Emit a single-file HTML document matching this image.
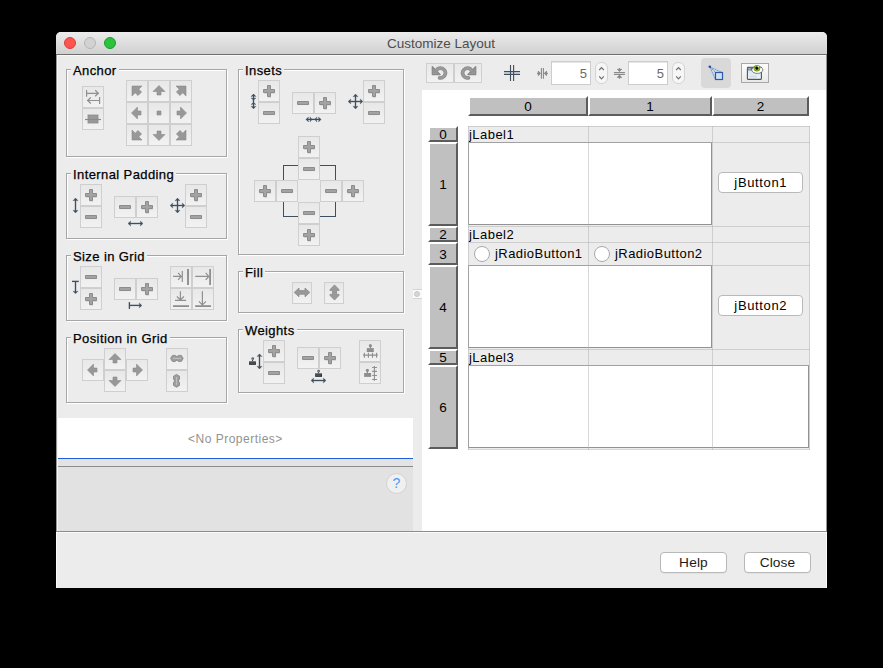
<!DOCTYPE html>
<html><head><meta charset="utf-8">
<style>
*{box-sizing:border-box;margin:0;padding:0}
html,body{width:883px;height:668px;background:#000;overflow:hidden;font-family:"Liberation Sans",sans-serif;}
.a{position:absolute}
#win{position:absolute;left:56px;top:32px;width:771px;height:556px;background:#ececec;border-radius:5px 5px 0 0;overflow:hidden}
#title{position:absolute;left:0;top:0;width:771px;height:23px;background:linear-gradient(#ececec,#d0d0d0);border-bottom:1px solid #6e6e6e}
.dot{position:absolute;top:5px;width:12px;height:12px;border-radius:50%}
.grp{position:absolute;border:1px solid #a6a6a6;box-shadow:inset 1px 1px 0 #fff,1px 1px 0 #fff}
.gt{position:absolute;font-size:13px;color:#000;background:#ececec;padding:0 2px 0 2px;line-height:14px;letter-spacing:0.4px;-webkit-text-stroke:0.25px #000}
.b{position:absolute;border:1px solid #cfcfcf;background:linear-gradient(#e8e8e8,#f2f2f2)}
.b svg{position:absolute;left:-1px;top:-1px;overflow:visible}
svg.a{overflow:visible}
.tf{background:#fff;border:1px solid #cdcdcd;box-shadow:inset 0 1px 0 #e6e6e6;font-size:13px;color:#6a6a6a;text-align:right;padding-right:3px;line-height:23px}
.sp{border:1px solid #d3d3d3;border-radius:6px;background:#f6f6f6}
.hd{background:#c0c0c0;border-style:solid;border-width:2px;border-color:#fff #5c5c5c #5c5c5c #fff;font-size:13.5px;color:#000;text-align:center;line-height:16px;padding-top:1px}
.lbl{font-size:13px;color:#000;line-height:14px;letter-spacing:0.45px;white-space:nowrap}
.jb{background:#fff;border:1px solid #b9b9b9;border-radius:4px;font-size:13px;color:#000;text-align:center;line-height:19px;letter-spacing:0.65px;text-indent:0.6px}
.gl{background:rgba(175,175,175,0.5)}
.pb{background:#fff;border:1px solid #b8b8b8;border-radius:4px;font-size:13.7px;color:#1a1a1a;text-align:center;line-height:19px;letter-spacing:0.15px;box-shadow:0 0.5px 0.5px rgba(0,0,0,0.08)}
</style></head><body>
<svg width="0" height="0" style="position:absolute">
<defs>
<symbol id="pl" viewBox="0 0 22 22" overflow="visible"><path d="M9.5 6.5h3v4h4v3h-4v4h-3v-4h-4v-3h4z" fill="#d9d9d9" transform="translate(0.6,0.6)"/><path d="M9.5 5.5h3v4h4v3h-4v4h-3v-4h-4v-3h4z" fill="#a3a3a3" stroke="#8c8c8c" stroke-width="1"/></symbol>
<symbol id="mi" viewBox="0 0 22 22" overflow="visible"><path d="M5.5 9.5h11v3h-11z" fill="#d9d9d9" transform="translate(0.6,0.6)"/><path d="M5.5 9.5h11v3h-11z" fill="#a3a3a3" stroke="#8c8c8c" stroke-width="1"/></symbol>
</defs>
</svg>
<div id="win">
 <div id="title">
  <div class="dot" style="left:8px;background:#fc5550;border:1px solid #dc3d38"></div>
  <div class="dot" style="left:28px;background:#d2d2d2;border:1px solid #b5b5b5"></div>
  <div class="dot" style="left:48px;background:#2cc13e;border:1px solid #1a9e28"></div>
  <div class="a" style="left:331px;top:3.6px;font-size:13.5px;color:#4d4d4d;letter-spacing:0px">Customize Layout</div>
 </div>
</div>

<!-- properties -->
<div class="a" style="left:58px;top:418px;width:355px;height:40px;background:#fff"></div>
<div class="a" style="left:58px;top:458px;width:355px;height:1px;background:#1f5ed6"></div>
<div class="a" style="left:58px;top:459px;width:355px;height:7px;background:#e3e3e3"></div>
<div class="a" style="left:58px;top:466px;width:355px;height:1px;background:#8c8c8c"></div>
<div class="a" style="left:58px;top:467px;width:355px;height:64px;background:#e2e2e2"></div>
<div class="a" style="left:188px;top:432px;font-size:12px;color:#929292;letter-spacing:0.5px">&lt;No Properties&gt;</div>
<div class="a" style="left:386px;top:473px;width:21px;height:21px;border-radius:50%;background:#f0f0f0;border:1px solid #d2d2d2;color:#4a9cf2;font-size:14px;text-align:center;line-height:18px">?</div>

<!-- bottom bar -->
<div class="a" style="left:56px;top:531px;width:771px;height:1px;background:#8c8c8c"></div>
<div class="a" style="left:56px;top:532px;width:771px;height:56px;background:#ececec;border-top:1px solid #fafafa;border-left:1px solid #fafafa;border-right:1px solid #fafafa"></div>
<div class="a" style="left:56px;top:55px;width:1px;height:476px;background:#959595"></div>
<div class="a" style="left:57px;top:55px;width:1px;height:476px;background:#f6f6f6"></div>
<div class="a" style="left:826px;top:55px;width:1px;height:476px;background:#959595"></div>
<div class="a" style="left:57px;top:55px;width:769px;height:1px;background:#f9f9f9"></div>

<!-- right white area -->
<div class="a" style="left:422px;top:90px;width:404px;height:441px;background:#fff"></div>

<div class="grp" style="left:66px;top:69px;width:161px;height:88px"></div>
<div class="gt" style="left:71px;top:64px">Anchor</div>
<div class="grp" style="left:66px;top:173px;width:161px;height:66px"></div>
<div class="gt" style="left:71px;top:168px">Internal Padding</div>
<div class="grp" style="left:66px;top:255px;width:161px;height:66px"></div>
<div class="gt" style="left:71px;top:250px">Size in Grid</div>
<div class="grp" style="left:66px;top:337px;width:161px;height:66px"></div>
<div class="gt" style="left:71px;top:332px">Position in Grid</div>
<div class="grp" style="left:238px;top:69px;width:166px;height:186px"></div>
<div class="gt" style="left:243px;top:64px">Insets</div>
<div class="grp" style="left:238px;top:271px;width:166px;height:42px"></div>
<div class="gt" style="left:243px;top:266px">Fill</div>
<div class="grp" style="left:238px;top:329px;width:166px;height:64px"></div>
<div class="gt" style="left:243px;top:324px">Weights</div>
<div class="b" style="left:82px;top:86px;width:22px;height:22px"><svg width="22" height="22" viewBox="0 0 22 22"><path d="M4.6 4V10.7M4.6 7.3H16.4M13.2 4.3L16.4 7.3L13.2 10.3" fill="none" stroke="#8f8f8f" stroke-width="1.2"/><path d="M17.6 11V18M17.6 14.5H5.6M8.8 11.5L5.6 14.5L8.8 17.5" fill="none" stroke="#8f8f8f" stroke-width="1.2"/></svg></div>
<div class="b" style="left:82px;top:108px;width:22px;height:22px"><svg width="22" height="22" viewBox="0 0 22 22"><rect x="6" y="7" width="10" height="8" fill="#9a9a9a" stroke="#8a8a8a" stroke-width="0.8"/><path d="M3 11.5h16" stroke="#8a8a8a" stroke-width="1.2"/></svg></div>
<div class="b" style="left:126px;top:80px;width:22px;height:22px"><svg width="22" height="22" viewBox="0 0 22 22"><path d="M6 6H16L12.8 9.2L15.6 12L12 15.6L9.2 12.8L6 16Z" fill="#989898" stroke="#8c8c8c" stroke-width="0.6"/></svg></div>
<div class="b" style="left:148px;top:80px;width:22px;height:22px"><svg width="22" height="22" viewBox="0 0 22 22"><path d="M11 5.5L17 11.5H13V15H9V11.5H5Z" fill="#989898" stroke="#8c8c8c" stroke-width="0.6"/></svg></div>
<div class="b" style="left:170px;top:80px;width:22px;height:22px"><svg width="22" height="22" viewBox="0 0 22 22"><path d="M16 6H6L9.2 9.2L6.4 12L10 15.6L12.8 12.8L16 16Z" fill="#989898" stroke="#8c8c8c" stroke-width="0.6"/></svg></div>
<div class="b" style="left:126px;top:102px;width:22px;height:22px"><svg width="22" height="22" viewBox="0 0 22 22"><path d="M5.5 11L11.5 5V9H15V13H11.5V17Z" fill="#989898" stroke="#8c8c8c" stroke-width="0.6"/></svg></div>
<div class="b" style="left:148px;top:102px;width:22px;height:22px"><svg width="22" height="22" viewBox="0 0 22 22"><path d="M9 9H13V13H9Z" fill="#989898" stroke="#8c8c8c" stroke-width="0.6"/></svg></div>
<div class="b" style="left:170px;top:102px;width:22px;height:22px"><svg width="22" height="22" viewBox="0 0 22 22"><path d="M16.5 11L10.5 5V9H7V13H10.5V17Z" fill="#989898" stroke="#8c8c8c" stroke-width="0.6"/></svg></div>
<div class="b" style="left:126px;top:124px;width:22px;height:22px"><svg width="22" height="22" viewBox="0 0 22 22"><path d="M6 16H16L12.8 12.8L15.6 10L12 6.4L9.2 9.2L6 6Z" fill="#989898" stroke="#8c8c8c" stroke-width="0.6"/></svg></div>
<div class="b" style="left:148px;top:124px;width:22px;height:22px"><svg width="22" height="22" viewBox="0 0 22 22"><path d="M11 16.5L17 10.5H13V7H9V10.5H5Z" fill="#989898" stroke="#8c8c8c" stroke-width="0.6"/></svg></div>
<div class="b" style="left:170px;top:124px;width:22px;height:22px"><svg width="22" height="22" viewBox="0 0 22 22"><path d="M16 16H6L9.2 12.8L6.4 10L10 6.4L12.8 9.2L16 6Z" fill="#989898" stroke="#8c8c8c" stroke-width="0.6"/></svg></div>
<div class="b" style="left:80px;top:184px;width:22px;height:22px"><svg width="22" height="22" viewBox="0 0 22 22"><use href="#pl"/></svg></div>
<div class="b" style="left:80px;top:206px;width:22px;height:22px"><svg width="22" height="22" viewBox="0 0 22 22"><use href="#mi"/></svg></div>
<div class="b" style="left:114px;top:196px;width:22px;height:22px"><svg width="22" height="22" viewBox="0 0 22 22"><use href="#mi"/></svg></div>
<div class="b" style="left:136px;top:196px;width:22px;height:22px"><svg width="22" height="22" viewBox="0 0 22 22"><use href="#pl"/></svg></div>
<div class="b" style="left:185px;top:184px;width:22px;height:22px"><svg width="22" height="22" viewBox="0 0 22 22"><use href="#pl"/></svg></div>
<div class="b" style="left:185px;top:206px;width:22px;height:22px"><svg width="22" height="22" viewBox="0 0 22 22"><use href="#mi"/></svg></div>
<div class="b" style="left:80px;top:266px;width:22px;height:22px"><svg width="22" height="22" viewBox="0 0 22 22"><use href="#mi"/></svg></div>
<div class="b" style="left:80px;top:288px;width:22px;height:22px"><svg width="22" height="22" viewBox="0 0 22 22"><use href="#pl"/></svg></div>
<div class="b" style="left:114px;top:278px;width:22px;height:22px"><svg width="22" height="22" viewBox="0 0 22 22"><use href="#mi"/></svg></div>
<div class="b" style="left:136px;top:278px;width:22px;height:22px"><svg width="22" height="22" viewBox="0 0 22 22"><use href="#pl"/></svg></div>
<div class="b" style="left:170px;top:266px;width:22px;height:22px"><svg width="22" height="22" viewBox="0 0 22 22"><path d="M3 10.4H11M8.1 6.9L11.2 10.4L8.1 13.9M12.3 5V15.9" fill="none" stroke="#8f8f8f" stroke-width="1.2"/><path d="M18 3V19" stroke="#8e8e8e" stroke-width="1.9"/></svg></div>
<div class="b" style="left:192px;top:266px;width:22px;height:22px"><svg width="22" height="22" viewBox="0 0 22 22"><path d="M3.2 10.4H16.5M13.7 6.9L16.8 10.4L13.7 13.9" fill="none" stroke="#8f8f8f" stroke-width="1.2"/><path d="M18.1 3V19" stroke="#8e8e8e" stroke-width="1.8"/></svg></div>
<div class="b" style="left:170px;top:288px;width:22px;height:22px"><svg width="22" height="22" viewBox="0 0 22 22"><path d="M10.4 3.2V11.6M6.9 8.5L10.4 11.9L13.9 8.5M5 12.3H16.1" fill="none" stroke="#8f8f8f" stroke-width="1.2"/><path d="M3 18.1H19" stroke="#8e8e8e" stroke-width="1.8"/></svg></div>
<div class="b" style="left:192px;top:288px;width:22px;height:22px"><svg width="22" height="22" viewBox="0 0 22 22"><path d="M10.4 3.2V16.6M6.9 13.3L10.4 16.8L13.9 13.3" fill="none" stroke="#8f8f8f" stroke-width="1.2"/><path d="M3.2 18.1H19" stroke="#8e8e8e" stroke-width="1.8"/></svg></div>
<div class="b" style="left:104px;top:348px;width:22px;height:22px"><svg width="22" height="22" viewBox="0 0 22 22"><path d="M11 5.5L17 11.5H13V15H9V11.5H5Z" fill="#989898" stroke="#8c8c8c" stroke-width="0.6"/></svg></div>
<div class="b" style="left:104px;top:370px;width:22px;height:22px"><svg width="22" height="22" viewBox="0 0 22 22"><path d="M11 16.5L17 10.5H13V7H9V10.5H5Z" fill="#989898" stroke="#8c8c8c" stroke-width="0.6"/></svg></div>
<div class="b" style="left:82px;top:359px;width:22px;height:22px"><svg width="22" height="22" viewBox="0 0 22 22"><path d="M5.5 11L11.5 5V9H15V13H11.5V17Z" fill="#989898" stroke="#8c8c8c" stroke-width="0.6"/></svg></div>
<div class="b" style="left:126px;top:359px;width:22px;height:22px"><svg width="22" height="22" viewBox="0 0 22 22"><path d="M16.5 11L10.5 5V9H7V13H10.5V17Z" fill="#989898" stroke="#8c8c8c" stroke-width="0.6"/></svg></div>
<div class="b" style="left:166px;top:348px;width:22px;height:22px"><svg width="22" height="22" viewBox="0 0 22 22"><path d="M4.6 10.4L6.4 7.4H9.2L10.9 8.6L12.6 7.4H15.4L17.2 10.4L15.4 13.4H12.6L10.9 12.2L9.2 13.4H6.4Z" fill="#9e9e9e" stroke="#8a8a8a" stroke-width="0.9" stroke-linejoin="round"/><path d="M7 10.4H14.8" stroke="#c4c4c4" stroke-width="0.9"/></svg></div>
<div class="b" style="left:166px;top:370px;width:22px;height:22px"><svg width="22" height="22" viewBox="0 0 22 22"><path d="M10.5 4.4L13.5 6.2V9L12.3 10.9L13.5 12.6V15.4L10.5 17.2L7.5 15.4V12.6L8.7 10.9L7.5 9V6.2Z" fill="#9e9e9e" stroke="#8a8a8a" stroke-width="0.9" stroke-linejoin="round"/><path d="M10.5 7V14.8" stroke="#c4c4c4" stroke-width="0.9"/></svg></div>
<div class="b" style="left:258px;top:80px;width:22px;height:22px"><svg width="22" height="22" viewBox="0 0 22 22"><use href="#pl"/></svg></div>
<div class="b" style="left:258px;top:102px;width:22px;height:22px"><svg width="22" height="22" viewBox="0 0 22 22"><use href="#mi"/></svg></div>
<div class="b" style="left:292px;top:92px;width:22px;height:22px"><svg width="22" height="22" viewBox="0 0 22 22"><use href="#mi"/></svg></div>
<div class="b" style="left:314px;top:92px;width:22px;height:22px"><svg width="22" height="22" viewBox="0 0 22 22"><use href="#pl"/></svg></div>
<div class="b" style="left:363px;top:80px;width:22px;height:22px"><svg width="22" height="22" viewBox="0 0 22 22"><use href="#pl"/></svg></div>
<div class="b" style="left:363px;top:102px;width:22px;height:22px"><svg width="22" height="22" viewBox="0 0 22 22"><use href="#mi"/></svg></div>
<div class="a" style="left:283px;top:165px;width:53px;height:52px;border:1px solid #3e4f60"></div>
<div class="b" style="left:298px;top:136px;width:22px;height:22px"><svg width="22" height="22" viewBox="0 0 22 22"><use href="#pl"/></svg></div>
<div class="b" style="left:298px;top:158px;width:22px;height:22px"><svg width="22" height="22" viewBox="0 0 22 22"><use href="#mi"/></svg></div>
<div class="b" style="left:254px;top:180px;width:22px;height:22px"><svg width="22" height="22" viewBox="0 0 22 22"><use href="#pl"/></svg></div>
<div class="b" style="left:276px;top:180px;width:22px;height:22px"><svg width="22" height="22" viewBox="0 0 22 22"><use href="#mi"/></svg></div>
<div class="a" style="left:298px;top:180px;width:22px;height:22px;background:#ececec"></div>
<div class="b" style="left:320px;top:180px;width:22px;height:22px"><svg width="22" height="22" viewBox="0 0 22 22"><use href="#mi"/></svg></div>
<div class="b" style="left:342px;top:180px;width:22px;height:22px"><svg width="22" height="22" viewBox="0 0 22 22"><use href="#pl"/></svg></div>
<div class="b" style="left:298px;top:202px;width:22px;height:22px"><svg width="22" height="22" viewBox="0 0 22 22"><use href="#mi"/></svg></div>
<div class="b" style="left:298px;top:224px;width:22px;height:22px"><svg width="22" height="22" viewBox="0 0 22 22"><use href="#pl"/></svg></div>
<div class="b" style="left:292px;top:282px;width:20px;height:22px"><svg width="20" height="22" viewBox="0 0 20 22"><path d="M2.2 10.4L7 6V8.6H13V6L17.8 10.4L13 14.8V12.2H7V14.8Z" fill="#999" stroke="#8a8a8a" stroke-width="0.8" stroke-linejoin="round"/></svg></div>
<div class="b" style="left:324px;top:282px;width:20px;height:22px"><svg width="20" height="22" viewBox="0 0 20 22"><path d="M10.5 2.9L15 7.6V8.6H12.5V12.3H15V13.4L10.5 18.1L6 13.4V12.3H8.5V8.6H6V7.6Z" fill="#999" stroke="#8a8a8a" stroke-width="0.8" stroke-linejoin="round"/></svg></div>
<div class="b" style="left:263px;top:340px;width:22px;height:22px"><svg width="22" height="22" viewBox="0 0 22 22"><use href="#pl"/></svg></div>
<div class="b" style="left:263px;top:362px;width:22px;height:22px"><svg width="22" height="22" viewBox="0 0 22 22"><use href="#mi"/></svg></div>
<div class="b" style="left:297px;top:347px;width:22px;height:22px"><svg width="22" height="22" viewBox="0 0 22 22"><use href="#mi"/></svg></div>
<div class="b" style="left:319px;top:347px;width:22px;height:22px"><svg width="22" height="22" viewBox="0 0 22 22"><use href="#pl"/></svg></div>
<div class="b" style="left:359px;top:340px;width:22px;height:22px"><svg width="22" height="22" viewBox="0 0 22 22"><rect x="7.8" y="8.1" width="7" height="3.9" fill="#8e8e8e"/><path d="M11.4 5.7V8.1" stroke="#8e8e8e" stroke-width="1.2"/><circle cx="11.4" cy="5.7" r="1.6" fill="#8e8e8e"/><path d="M4 15.1H18.8M5.4 12.7V17.8M9.4 12.7V17.8M13.5 12.7V17.8M17.6 12.7V17.8" fill="none" stroke="#8f8f8f" stroke-width="1.1"/></svg></div>
<div class="b" style="left:359px;top:362px;width:22px;height:22px"><svg width="22" height="22" viewBox="0 0 22 22"><rect x="5.1" y="11" width="7" height="3.9" fill="#8e8e8e"/><path d="M8.4 8.3V11" stroke="#8e8e8e" stroke-width="1.2"/><circle cx="8.4" cy="8.3" r="1.6" fill="#8e8e8e"/><path d="M15.4 4V18.8M13.1 5.5H18M13.1 9.4H18M13.1 13.5H18M13.1 17.5H18" fill="none" stroke="#8f8f8f" stroke-width="1.1"/></svg></div>
<svg class="a" style="left:0;top:0" width="883" height="668" viewBox="0 0 883 668"><path d="M75.5 199L75.5 212" stroke="#3e4f60" stroke-width="1.35" fill="none"/><path d="M75.50 198.00L78.00 200.70L75.50 200.15L73.00 200.70ZM75.50 213.00L73.00 210.30L75.50 210.85L78.00 210.30Z" fill="#3e4f60" stroke="#3e4f60" stroke-width="0.35" stroke-linejoin="round"/><path d="M129 223.5L142 223.5" stroke="#3e4f60" stroke-width="1.35" fill="none"/><path d="M128.00 223.50L130.70 221.00L130.15 223.50L130.70 226.00ZM143.00 223.50L140.30 226.00L140.85 223.50L140.30 221.00Z" fill="#3e4f60" stroke="#3e4f60" stroke-width="0.35" stroke-linejoin="round"/><path d="M171.1 205.5L183.9 205.5" stroke="#3e4f60" stroke-width="1.35" fill="none"/><path d="M177.5 199.1L177.5 211.9" stroke="#3e4f60" stroke-width="1.35" fill="none"/><path d="M177.50 198.10L180.00 200.80L177.50 200.25L175.00 200.80ZM177.50 212.90L175.00 210.20L177.50 210.75L180.00 210.20ZM170.10 205.50L172.80 203.00L172.25 205.50L172.80 208.00ZM184.90 205.50L182.20 208.00L182.75 205.50L182.20 203.00Z" fill="#3e4f60" stroke="#3e4f60" stroke-width="0.35" stroke-linejoin="round"/><path d="M72 281.4L78.8 281.4" stroke="#3e4f60" stroke-width="1.35" fill="none"/><path d="M75.5 281.4L75.5 292.8" stroke="#3e4f60" stroke-width="1.35" fill="none"/><path d="M75.50 293.80L73.00 291.10L75.50 291.65L78.00 291.10Z" fill="#3e4f60" stroke="#3e4f60" stroke-width="0.35" stroke-linejoin="round"/><path d="M129.4 302.1L129.4 308.9" stroke="#3e4f60" stroke-width="1.35" fill="none"/><path d="M129.4 305.4L140.9 305.4" stroke="#3e4f60" stroke-width="1.35" fill="none"/><path d="M141.90 305.40L139.20 307.90L139.75 305.40L139.20 302.90Z" fill="#3e4f60" stroke="#3e4f60" stroke-width="0.35" stroke-linejoin="round"/><path d="M253.5 94.5L253.5 108.3" stroke="#3e4f60" stroke-width="1.35" fill="none"/><path d="M253.50 94.00L256.00 96.50L253.50 95.95L251.00 96.50ZM253.50 100.00L251.00 98.00L253.50 98.55L256.00 98.00ZM253.50 102.50L256.00 104.50L253.50 103.95L251.00 104.50ZM253.50 108.80L251.00 106.30L253.50 106.85L256.00 106.30Z" fill="#3e4f60" stroke="#3e4f60" stroke-width="0.35" stroke-linejoin="round"/><path d="M306.5 119.4L320.5 119.4" stroke="#3e4f60" stroke-width="1.35" fill="none"/><path d="M306.00 119.40L308.50 116.90L307.95 119.40L308.50 121.90ZM312.00 119.40L310.00 121.90L310.55 119.40L310.00 116.90ZM314.80 119.40L316.80 116.90L316.25 119.40L316.80 121.90ZM321.00 119.40L318.50 121.90L319.05 119.40L318.50 116.90Z" fill="#3e4f60" stroke="#3e4f60" stroke-width="0.35" stroke-linejoin="round"/><path d="M349.1 101.5L361.9 101.5" stroke="#3e4f60" stroke-width="1.35" fill="none"/><path d="M355.5 95.1L355.5 107.9" stroke="#3e4f60" stroke-width="1.35" fill="none"/><path d="M355.50 94.10L358.00 96.80L355.50 96.25L353.00 96.80ZM355.50 108.90L353.00 106.20L355.50 106.75L358.00 106.20ZM348.10 101.50L350.80 99.00L350.25 101.50L350.80 104.00ZM362.90 101.50L360.20 104.00L360.75 101.50L360.20 99.00Z" fill="#3e4f60" stroke="#3e4f60" stroke-width="0.35" stroke-linejoin="round"/><path d="M259.5 354.5L259.5 368.3" stroke="#3e4f60" stroke-width="1.35" fill="none"/><path d="M259.50 353.90L262.00 356.60L259.50 356.05L257.00 356.60ZM259.50 368.90L257.00 366.20L259.50 366.75L262.00 366.20Z" fill="#3e4f60" stroke="#3e4f60" stroke-width="0.35" stroke-linejoin="round"/><path d="M312 380.5L325 380.5" stroke="#3e4f60" stroke-width="1.35" fill="none"/><path d="M311.00 380.50L313.70 378.00L313.15 380.50L313.70 383.00ZM326.00 380.50L323.30 383.00L323.85 380.50L323.30 378.00Z" fill="#3e4f60" stroke="#3e4f60" stroke-width="0.35" stroke-linejoin="round"/><rect x="249.1" y="361.2" width="6.8" height="3.6" fill="#1e1e1e"/><rect x="249.1" y="361.2" width="6.8" height="1.2" fill="#7b8b9b"/><rect x="249.9" y="363.0" width="5.199999999999999" height="0.8" fill="#5a5a5a"/><path d="M252.6 359.6V361.2" stroke="#333" stroke-width="1"/><circle cx="252.6" cy="358.6" r="1.5" fill="#7f8f9f"/><path d="M252.9 357.40000000000003A1.5 1.5 0 0 1 252.9 359.8" fill="#111"/><rect x="315.2" y="373.2" width="6.8" height="3.6" fill="#1e1e1e"/><rect x="315.2" y="373.2" width="6.8" height="1.2" fill="#7b8b9b"/><rect x="316.0" y="375.0" width="5.199999999999999" height="0.8" fill="#5a5a5a"/><path d="M318.5 371.9V373.2" stroke="#333" stroke-width="1"/><circle cx="318.5" cy="370.9" r="1.5" fill="#7f8f9f"/><path d="M318.8 369.7A1.5 1.5 0 0 1 318.8 372.09999999999997" fill="#111"/></svg>
<div class="a" style="left:413px;top:289px;width:9px;height:1px;background:#d4d4d4"></div>
<div class="a" style="left:413px;top:290px;width:9px;height:8px;background:#fafafa"></div>
<div class="a" style="left:413px;top:298px;width:9px;height:1px;background:#d4d4d4"></div>
<div class="a" style="left:414px;top:291px;width:6px;height:6px;border-radius:50%;background:#d6d6d6;border:1px solid #c8c8c8"></div>
<div class="b" style="left:426px;top:63px;width:28px;height:20px"><svg width="28" height="20" viewBox="0 0 28 20"><path d="M6.3 3.6V11.6H14.2Z" fill="#979797" stroke="#8a8a8a" stroke-width="1.3" stroke-linejoin="round"/><path d="M10.4 7.5A4.85 4.85 0 1 1 13.6 14.8" fill="none" stroke="#8c8c8c" stroke-width="3.8" stroke-linecap="round"/><path d="M10.4 7.5A4.85 4.85 0 1 1 13.6 14.8" fill="none" stroke="#9b9b9b" stroke-width="2.2" stroke-linecap="round"/></svg></div>
<div class="b" style="left:454px;top:63px;width:28px;height:20px"><svg width="28" height="20" viewBox="0 0 28 20"><g transform="translate(28,0) scale(-1,1)"><path d="M6.3 3.6V11.6H14.2Z" fill="#979797" stroke="#8a8a8a" stroke-width="1.3" stroke-linejoin="round"/><path d="M10.4 7.5A4.85 4.85 0 1 1 13.6 14.8" fill="none" stroke="#8c8c8c" stroke-width="3.8" stroke-linecap="round"/><path d="M10.4 7.5A4.85 4.85 0 1 1 13.6 14.8" fill="none" stroke="#9b9b9b" stroke-width="2.2" stroke-linecap="round"/></g></svg></div>
<svg class="a" style="left:503px;top:64px" width="18" height="18" viewBox="0 0 18 18"><path d="M7.5 1V17M10.6 1V17M1 7.6H17M1 10.4H17" fill="none" stroke="#3e4e5e" stroke-width="1.1"/></svg>
<svg class="a" style="left:534px;top:64px" width="18" height="18" viewBox="0 0 18 18"><path d="M7.4 4V14.8M9.4 4V14.8" stroke="#8a8a8a" stroke-width="1.1"/><path d="M3 9.4H6M13.9 9.4H10.8" stroke="#8a8a8a" stroke-width="1.1"/><path d="M4.3 7.1L6.5 9.4L4.3 11.7ZM12.5 7.1L10.3 9.4L12.5 11.7Z" fill="#8a8a8a" stroke="#8a8a8a" stroke-width="0.9" stroke-linejoin="round"/></svg>
<svg class="a" style="left:610px;top:64px" width="18" height="18" viewBox="0 0 18 18"><path d="M3.9 8.5H14.9M3.9 10.4H14.9" stroke="#8a8a8a" stroke-width="1.1"/><path d="M9.5 4V7M9.5 14.7V11.3" stroke="#8a8a8a" stroke-width="1.1"/><path d="M7.4 5.3L9.5 7.6L11.6 5.3ZM7.4 13.4L9.5 11.1L11.6 13.4Z" fill="#8a8a8a" stroke="#8a8a8a" stroke-width="0.9" stroke-linejoin="round"/></svg>
<div class="a tf" style="left:551px;top:61px;width:40px;height:24px"><span>5</span></div>
<div class="a sp" style="left:595px;top:62px;width:13px;height:22px"><svg width="13" height="22" viewBox="0 0 13 22" style="position:absolute;left:-1px;top:-1px"><path d="M4.2 8L6.5 5.6L8.8 8M4.2 14.4L6.5 16.8L8.8 14.4" fill="none" stroke="#707070" stroke-width="1.2"/></svg></div>
<div class="a tf" style="left:628px;top:61px;width:40px;height:24px"><span>5</span></div>
<div class="a sp" style="left:672px;top:62px;width:13px;height:22px"><svg width="13" height="22" viewBox="0 0 13 22" style="position:absolute;left:-1px;top:-1px"><path d="M4.2 8L6.5 5.6L8.8 8M4.2 14.4L6.5 16.8L8.8 14.4" fill="none" stroke="#707070" stroke-width="1.2"/></svg></div>
<div class="a" style="left:701px;top:58px;width:30px;height:30px;background:#d9d9d9;border-radius:4px"></div>
<svg class="a" style="left:708px;top:65px" width="16" height="16" viewBox="0 0 16 16"><path d="M1.8 1.8L7.5 7.2M1.8 1.8L14 7.5M1.8 1.8L7.2 14" stroke="#4f93ea" stroke-width="0.9" fill="none" stroke-dasharray="2 0.6"/><circle cx="1.8" cy="1.8" r="1.3" fill="#2a4f9a"/><rect x="7.5" y="7.5" width="7" height="7" fill="#cfe0f7" stroke="#2c5aa8" stroke-width="1.2"/></svg>
<div class="a" style="left:741px;top:63px;width:28px;height:20px;border:1px solid #a8a8a8;background:linear-gradient(#fdfdfd,#e9e9e9)"></div>
<svg class="a" style="left:745px;top:63px" width="20" height="20" viewBox="0 0 20 20"><defs><linearGradient id="wg" x1="0" y1="0" x2="0" y2="1"><stop offset="0" stop-color="#d3dde8"/><stop offset="1" stop-color="#f3f6f9"/></linearGradient></defs><rect x="2.4" y="4.4" width="14" height="12" rx="0.6" fill="url(#wg)" stroke="#44566a" stroke-width="1.1"/><rect x="2.4" y="4.4" width="14" height="3" fill="#5d7489"/><rect x="3.3" y="5.3" width="2.4" height="1.2" fill="#c4d0dc"/><rect x="4.5" y="12.6" width="7.3" height="1.9" fill="#cfdbe7"/><ellipse cx="12.3" cy="6.9" rx="5.6" ry="3.5" fill="#fff" stroke="#4a4a4a" stroke-width="0.7"/><circle cx="11.9" cy="5.2" r="3.3" fill="#6f9a1c"/><circle cx="11.9" cy="5.2" r="2.4" fill="#96bd3a"/><circle cx="11.9" cy="5.1" r="1.6" fill="#050505"/><circle cx="13.2" cy="3.7" r="0.7" fill="#fff"/></svg>
<div class="a hd" style="left:468px;top:96px;width:120px;height:20px"><span>0</span></div>
<div class="a hd" style="left:588px;top:96px;width:124px;height:20px"><span>1</span></div>
<div class="a hd" style="left:712px;top:96px;width:97px;height:20px"><span>2</span></div>
<div class="a hd" style="left:428px;top:126px;width:30px;height:16px;line-height:12px"><span>0</span></div>
<div class="a hd" style="left:428px;top:142px;width:30px;height:84px;line-height:80px"><span>1</span></div>
<div class="a hd" style="left:428px;top:226px;width:30px;height:16px;line-height:12px"><span>2</span></div>
<div class="a hd" style="left:428px;top:242px;width:30px;height:23px;line-height:19px"><span>3</span></div>
<div class="a hd" style="left:428px;top:265px;width:30px;height:84px;line-height:80px"><span>4</span></div>
<div class="a hd" style="left:428px;top:349px;width:30px;height:16px;line-height:12px"><span>5</span></div>
<div class="a hd" style="left:428px;top:365px;width:30px;height:84px;line-height:80px"><span>6</span></div>
<div class="a" style="left:468px;top:126px;width:342px;height:323px;background:#ececec"></div>
<div class="a" style="left:468px;top:142px;width:244px;height:83px;background:#fff;border:1px solid #929292"></div>
<div class="a" style="left:468px;top:265px;width:244px;height:83px;background:#fff;border:1px solid #929292"></div>
<div class="a" style="left:468px;top:365px;width:341px;height:83px;background:#fff;border:1px solid #929292"></div>
<div class="a lbl" style="left:469px;top:128px">jLabel1</div>
<div class="a lbl" style="left:469px;top:228px">jLabel2</div>
<div class="a lbl" style="left:469px;top:351px">jLabel3</div>
<div class="a" style="left:474px;top:246px;width:16px;height:16px;border-radius:50%;background:#fff;border:1px solid #a9a9a9"></div>
<div class="a lbl" style="left:495px;top:247px">jRadioButton1</div>
<div class="a" style="left:594px;top:246px;width:16px;height:16px;border-radius:50%;background:#fff;border:1px solid #a9a9a9"></div>
<div class="a lbl" style="left:615px;top:247px">jRadioButton2</div>
<div class="a jb" style="left:718px;top:172px;width:85px;height:21px">jButton1</div>
<div class="a jb" style="left:718px;top:295px;width:85px;height:21px">jButton2</div>
<div class="a gl" style="left:468px;top:126px;width:1px;height:324px"></div>
<div class="a gl" style="left:588px;top:126px;width:1px;height:324px"></div>
<div class="a gl" style="left:712px;top:126px;width:1px;height:324px"></div>
<div class="a gl" style="left:809px;top:126px;width:1px;height:324px"></div>
<div class="a gl" style="left:468px;top:126px;width:342px;height:1px"></div>
<div class="a gl" style="left:468px;top:142px;width:342px;height:1px"></div>
<div class="a gl" style="left:468px;top:226px;width:342px;height:1px"></div>
<div class="a gl" style="left:468px;top:242px;width:342px;height:1px"></div>
<div class="a gl" style="left:468px;top:265px;width:342px;height:1px"></div>
<div class="a gl" style="left:468px;top:349px;width:342px;height:1px"></div>
<div class="a gl" style="left:468px;top:365px;width:342px;height:1px"></div>
<div class="a gl" style="left:468px;top:449px;width:342px;height:1px"></div>
<div class="a pb" style="left:660px;top:552px;width:67px;height:21px">Help</div>
<div class="a pb" style="left:744px;top:552px;width:67px;height:21px">Close</div>
</body></html>
